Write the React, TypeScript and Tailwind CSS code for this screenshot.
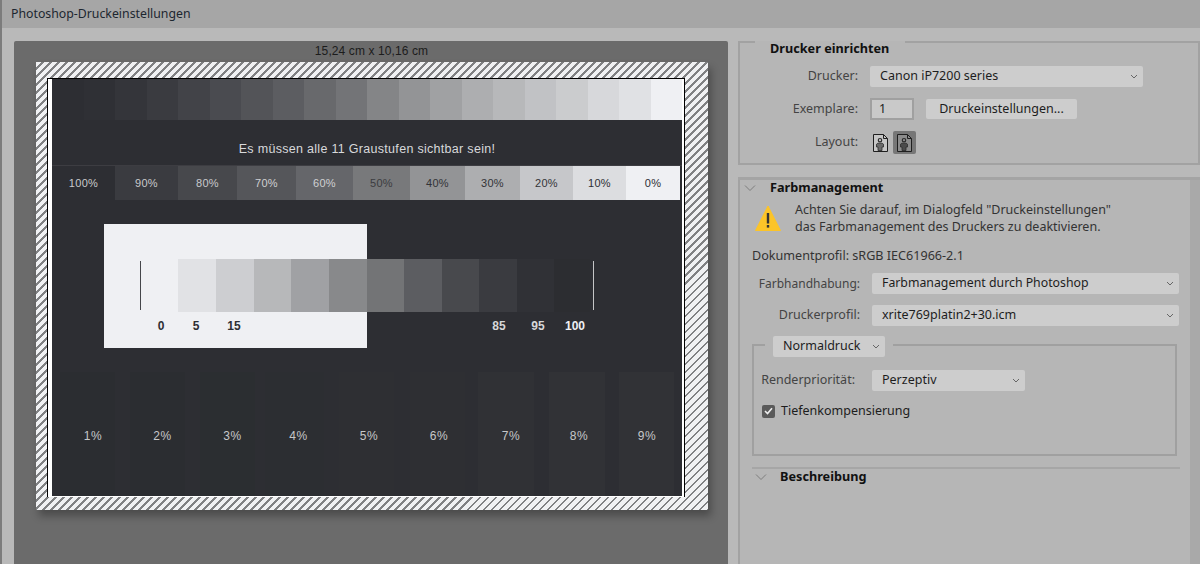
const uiFont = "font-['Noto_Sans',sans-serif]";

const topRamp = [
  "bg-[#2d2e33]", "bg-[#2f3035]", "bg-[#34353a]", "bg-[#3a3b40]", "bg-[#424348]",
  "bg-[#4a4b50]", "bg-[#535458]", "bg-[#5c5d61]", "bg-[#68696c]", "bg-[#737477]",
  "bg-[#848587]", "bg-[#939496]", "bg-[#a0a1a3]", "bg-[#adaeb0]", "bg-[#b7b8ba]",
  "bg-[#c1c2c5]", "bg-[#cbccce]", "bg-[#d7d8db]", "bg-[#e0e1e4]", "bg-[#eff0f3]",
];

const percentStrip = [
  { label: "100%", cls: "w-[63px] bg-[#2d2e33] text-[#c9cacc]" },
  { label: "90%", cls: "w-[63px] bg-[#3a3b40] text-[#c9cacc]" },
  { label: "80%", cls: "w-[59px] bg-[#47484c] text-[#c9cacc]" },
  { label: "70%", cls: "w-[59px] bg-[#55565a] text-[#d0d1d3]" },
  { label: "60%", cls: "w-[57px] bg-[#65666a] text-[#d0d1d3]" },
  { label: "50%", cls: "w-[57px] bg-[#78797b] text-[#3b3c40]" },
  { label: "40%", cls: "w-[55px] bg-[#939496] text-[#323337]" },
  { label: "30%", cls: "w-[55px] bg-[#adaeb0] text-[#323337]" },
  { label: "20%", cls: "w-[53px] bg-[#c6c7ca] text-[#323337]" },
  { label: "10%", cls: "w-[53px] bg-[#dcdde0] text-[#2d2e33]" },
  { label: "0%", cls: "w-[54px] bg-[#eff0f3] text-[#2d2e33]" },
];

const gaugeSteps = [
  "w-[38px] bg-[#e1e2e5]", "w-[38px] bg-[#cdced1]", "w-[37px] bg-[#b7b8ba]",
  "w-[38px] bg-[#a0a1a4]", "w-[38px] bg-[#88898b]", "w-[37px] bg-[#737476]",
  "w-[38px] bg-[#5c5d61]", "w-[37px] bg-[#48494d]", "w-[38px] bg-[#3a3b40]",
  "w-[37px] bg-[#303136]", "w-[36px] bg-[#2c2d31]",
];

const lowBars = [
  { label: "1%", cls: "ml-[8px] w-[55px] pl-[11px] bg-[#2b2d31]" },
  { label: "2%", cls: "ml-[15px] w-[55px] pl-[10px] bg-[#2b2d31]" },
  { label: "3%", cls: "ml-[15px] w-[55px] pl-[10px] bg-[#2b2e31]" },
  { label: "4%", cls: "ml-[10px] w-[59px] pl-[8px] bg-[#2c2e32]" },
  { label: "5%", cls: "ml-[15px] w-[55px] pl-[5px] bg-[#2e2f33]" },
  { label: "6%", cls: "ml-[16px] w-[55px] pl-[3px] bg-[#2e2f33]" },
  { label: "7%", cls: "ml-[13px] w-[56px] pl-[10px] bg-[#303135]" },
  { label: "8%", cls: "ml-[15px] w-[56px] pl-[4px] bg-[#313236]" },
  { label: "9%", cls: "ml-[14px] w-[55px] pl-[1px] bg-[#313236]" },
];

function Chevron({ className = "" }: { className?: string }) {
  return (
    <svg viewBox="0 0 8 5" className={`h-[5px] w-[8px] shrink-0 ${className}`} fill="none">
      <path d="M1 1l3 3 3-3" stroke="#666" strokeWidth="1" />
    </svg>
  );
}

function SectionChevron() {
  return (
    <svg viewBox="0 0 12 6" className="h-[6px] w-[12px] shrink-0" fill="none">
      <path d="M1 .5l5 5 5-5" stroke="#7d7d7d" strokeWidth="1" />
    </svg>
  );
}

function Select({ children, className = "" }: { children: string; className?: string }) {
  return (
    <div className={`flex h-[21px] items-center justify-between rounded-[2px] bg-[#cdcdcd] pl-[10px] pr-[5px] text-[#1d1d1d] ${className}`}>
      <span>{children}</span>
      <Chevron />
    </div>
  );
}

// page with a folded corner and a person on it
function PageIcon({ active = false }: { active?: boolean }) {
  return (
    <svg viewBox="0 0 17 18" className="h-[18px] w-[17px]" fill="none">
      <path
        d="M1.5.5h10l4 4v13h-14z"
        fill={active ? "#8c8c8c" : "#c6c6c6"}
        stroke="#1f1f1f"
      />
      <path d="M11.5.5v4h4" stroke="#1f1f1f" />
      <circle cx="8" cy="6.2" r="1.7" fill="none" stroke="#2b2b2b" strokeWidth="1.2" />
      <path
        d="M4.5 13V10.2l1.4-1h4.2l1.4 1V13h-1.5v3.5H6V13z"
        fill={active ? "#4a4a4a" : "#6a6a6a"}
        stroke="#2b2b2b"
        strokeWidth=".8"
      />
    </svg>
  );
}

function WarningIcon() {
  return (
    <svg viewBox="0 0 26 26" className="h-[26px] w-[26px] shrink-0">
      <path d="M13 1L25.5 25.5H.5z" fill="#fcc428" stroke="#fcc428" strokeLinejoin="round" />
      <rect x="11.8" y="8" width="2.4" height="10.5" fill="#333" />
      <rect x="11.8" y="20" width="2.4" height="2.6" fill="#333" />
    </svg>
  );
}

function TestImage() {
  return (
    <div className="flex h-[417px] w-[630px] flex-col bg-[#2d2e33] font-['Liberation_Sans',sans-serif]">
      <div className="flex h-[41px]">
        {topRamp.map((c) => (
          <div key={c} className={`flex-1 ${c}`} />
        ))}
      </div>
      <div className="flex h-[45px] items-end justify-center pb-[8px] text-[12.5px] leading-[15px] tracking-[0.3px] text-[#d8d9db]">
        Es müssen alle 11 Graustufen sichtbar sein!
      </div>
      <div className="flex h-[35px] border-t border-[#55565a]/40">
        {percentStrip.map((s) => (
          <div key={s.label} className={`flex items-center justify-center pt-[2px] text-[11px] tracking-[0.3px] ${s.cls}`}>
            {s.label}
          </div>
        ))}
      </div>
      <div className="mt-[24px] grid h-[125px] grid-cols-1 grid-rows-1">
        <div className="col-start-1 row-start-1 ml-[52px] w-[263px] bg-[#eff0f3]" />
        <div className="col-start-1 row-start-1 ml-[88px] mt-[35px]">
          <div className="flex h-[53px] items-stretch">
            <div className="my-[2px] w-px bg-[#45464a]" />
            <div className="flex pl-[37px]">
              {gaugeSteps.map((c) => (
                <div key={c} className={c} />
              ))}
            </div>
            <div className="my-[2px] ml-[3px] w-px bg-[#c4c5c7]" />
          </div>
          <div className="mt-[7px] flex text-center text-[12px] font-bold leading-[15px]">
            <div className="w-[42px] text-[#2d2e33]">0</div>
            <div className="w-[28px] text-[#2d2e33]">5</div>
            <div className="w-[48px] text-[#2d2e33]">15</div>
            <div className="w-[222px]" />
            <div className="w-[38px] text-[#d6d7d9]">85</div>
            <div className="w-[40px] text-[#d6d7d9]">95</div>
            <div className="w-[34px] text-[#eff0f3]">100</div>
          </div>
        </div>
      </div>
      <div className="mt-[24px] flex h-[124px]">
        {lowBars.map((b) => (
          <div key={b.label} className={`flex items-center justify-center pt-[4px] text-[12px] tracking-[0.6px] text-[#c6c7c9] ${b.cls}`}>
            {b.label}
          </div>
        ))}
      </div>
    </div>
  );
}

function Preview() {
  return (
    <div className="flex h-[523px] w-[714px] flex-col rounded-t-[2px] bg-[#6b6b6b]">
      <div className="h-[21px] pl-[1px] pt-[3px] text-center font-['Liberation_Sans',sans-serif] text-[12px] leading-[15px] tracking-[0.1px] text-[#1c1c1c]">
        15,24 cm x 10,16 cm
      </div>
      <div className="ml-[22px] h-[448px] w-[672px] bg-[repeating-linear-gradient(135deg,#f0f1f3_0px,#f0f1f3_3.9px,#808183_3.9px,#808183_5.66px)] pl-[11px] pt-[16px] shadow-[3px_6px_8px_rgba(0,0,0,0.3)]">
        <div className="h-[419px] w-[638px] border-x border-t border-black bg-white pl-[4px]">
          <TestImage />
        </div>
      </div>
    </div>
  );
}

function SetupPanel() {
  return (
    <div className="h-[124px] border-2 border-[#a2a2a2] bg-[#b6b6b6]">
      <div className="-mt-[2px] ml-[15px] flex h-[14px] w-[150px] items-start bg-[#b6b6b6] pl-[15px] text-[12.7px] font-bold leading-[15px] text-[#111]">
        Drucker einrichten
      </div>
      <div className="mt-[11px] flex items-center">
        <div className="w-[118px] text-right text-[#444]">Drucker:</div>
        <Select className="ml-[12px] w-[273px]">Canon iP7200 series</Select>
      </div>
      <div className="mt-[11px] flex items-center">
        <div className="w-[118px] text-right text-[#444]">Exemplare:</div>
        <div className="ml-[12px] flex h-[22px] w-[44px] items-center border-2 border-[#a0a0a0] bg-[#c9c9c9] pl-[7px] text-[#1d1d1d]">1</div>
        <div className="ml-[12px] flex h-[20px] w-[151px] items-center justify-center rounded-[2px] bg-[#cdcdcd] text-[#1d1d1d]">
          Druckeinstellungen...
        </div>
      </div>
      <div className="mt-[11px] flex items-center">
        <div className="w-[118px] text-right text-[#444]">Layout:</div>
        <div className="ml-[14px]"><PageIcon /></div>
        <div className="ml-[4px] flex h-[23px] w-[23px] items-center justify-center rounded-[2px] bg-[#777]">
          <PageIcon active />
        </div>
      </div>
    </div>
  );
}

function ColorPanel() {
  return (
    <div className="mt-[12px] flex flex-1 border-t-[3px] border-[#a4a4a4] bg-[#a9a9a9]">
      <div className="flex-1 border-l-2 border-[#a2a2a2] bg-[#b6b6b6]">
        <div className="mt-[1px] flex h-[14px] items-center pl-[4px] text-[12.7px] font-bold text-[#111]">
          <SectionChevron />
          <span className="ml-[14px]">Farbmanagement</span>
        </div>
        <div className="ml-[15px] mt-[10px] flex">
          <WarningIcon />
          <div className="ml-[14px] -mt-[4px] text-[12.5px] leading-[17px] text-[#333]">
            <div>Achten Sie darauf, im Dialogfeld "Druckeinstellungen"</div>
            <div>das Farbmanagement des Druckers zu deaktivieren.</div>
          </div>
        </div>
        <div className="ml-[12px] mt-[12px] text-[12.6px] leading-[17px] text-[#333]">Dokumentprofil: sRGB IEC61966-2.1</div>
        <div className="mt-[9px] flex items-center">
          <div className="w-[120px] text-right text-[12px] text-[#444]">Farbhandhabung:</div>
          <Select className="ml-[12px] w-[307px] text-[12.3px]">Farbmanagement durch Photoshop</Select>
        </div>
        <div className="mt-[11px] flex items-center">
          <div className="w-[120px] text-right text-[#444]">Druckerprofil:</div>
          <Select className="ml-[12px] w-[307px]">xrite769platin2+30.icm</Select>
        </div>
        <div className="ml-[12px] mt-[18px] h-[112px] w-[425px] border-2 border-[#a0a0a0]">
          <div className="-mt-[10px] ml-[11px] w-[128px] bg-[#b6b6b6] pl-[8px]">
            <Select className="w-[112px]">Normaldruck</Select>
          </div>
          <div className="mt-[13px] flex items-center">
            <div className="w-[101px] text-right text-[#444]">Renderpriorität:</div>
            <Select className="ml-[17px] w-[153px]">Perzeptiv</Select>
          </div>
          <div className="mt-[11px] flex items-center pl-[8px] text-[#1d1d1d]">
            <div className="flex h-[13px] w-[13px] items-center justify-center rounded-[2px] bg-[#5a5a5a]">
              <svg viewBox="0 0 9 8" className="h-[8px] w-[9px]" fill="none">
                <path d="M1 4l2.5 2.5L8 1.2" stroke="#eee" strokeWidth="1.6" />
              </svg>
            </div>
            <span className="ml-[6px]">Tiefenkompensierung</span>
          </div>
        </div>
        <div className="ml-[12px] mt-[11px] w-[428px] border-t-2 border-[#a6a6a6]" />
        <div className="ml-[15px] flex h-[16px] items-center text-[12.7px] font-bold text-[#111]">
          <SectionChevron />
          <span className="ml-[13px]">Beschreibung</span>
        </div>
      </div>
      <div className="w-[10px]" />
    </div>
  );
}

export default function App() {
  return (
    <div className={`flex h-[564px] w-[1200px] flex-col overflow-hidden border-l-2 border-[#7c7c7c] bg-[#b9b9b9] text-[12.5px] ${uiFont}`}>
      <div className="flex h-[28px] shrink-0 items-center bg-[#a6a6a6] pl-[9px] text-[12.3px] text-[#1c2630]">
        Photoshop-Druckeinstellungen
      </div>
      <div className="flex flex-1 pl-[12px] pt-[13px]">
        <Preview />
        <div className="ml-[10px] flex flex-1 flex-col">
          <SetupPanel />
          <ColorPanel />
        </div>
      </div>
    </div>
  );
}
